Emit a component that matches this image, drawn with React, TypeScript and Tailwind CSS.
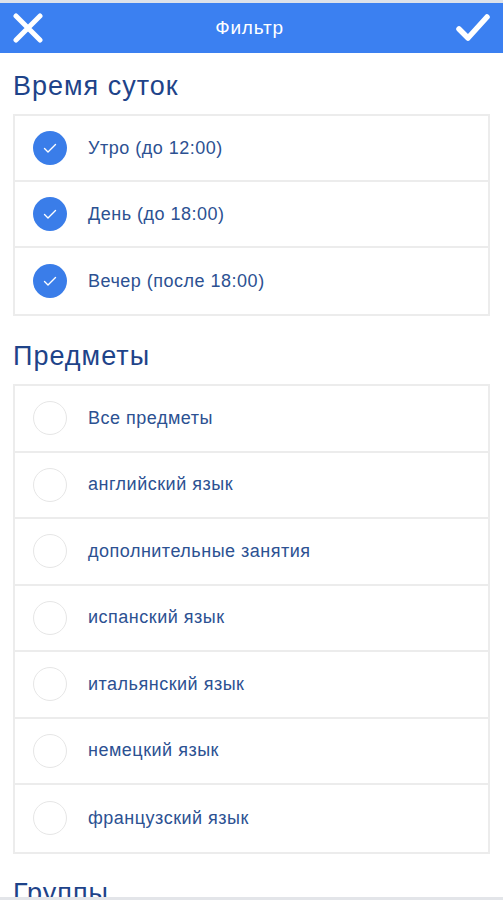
import React from "react";

const font = { fontFamily: '"Liberation Sans", Arial, sans-serif' };

function CheckCircle({ checked }: { checked: boolean }) {
  if (checked) {
    return (
      <div className="w-[34px] h-[34px] rounded-full bg-[#3a7de9] flex items-center justify-center shrink-0">
        <svg width="16" height="16" viewBox="0 0 16 16" fill="none">
          <path d="M2.5 8.5 L6 12 L13.5 4.5" stroke="#ffffff" strokeWidth="1.4" strokeLinecap="round" strokeLinejoin="round" />
        </svg>
      </div>
    );
  }
  return <div className="w-[34px] h-[34px] rounded-full border border-[#e6e6e6] bg-white shrink-0" />;
}

function Row({ label, checked, last, tall }: { label: string; checked: boolean; last?: boolean; tall?: boolean }) {
  return (
    <div
      className={`${tall ? "h-[66.5px]" : "h-[66px]"} flex items-center pl-[18px] ${last ? "" : "border-b-2 border-[#ececec]"}`}
    >
      <CheckCircle checked={checked} />
      <span className="ml-[21px] text-[18px] tracking-[0.5px] text-[#2c5192]">{label}</span>
    </div>
  );
}

function Section({
  title,
  items,
  checked,
  className,
  tall,
}: {
  title: string;
  items: string[];
  checked: boolean;
  className?: string;
  tall?: boolean;
}) {
  return (
    <div className={className}>
      <h2 className="text-[27px] leading-[32px] tracking-[1px] text-[#1e4389] mb-[12px] px-[13px]">{title}</h2>
      <div className="mx-[13px] border-2 border-[#ececec] bg-white">
        {items.map((it, i) => (
          <Row key={it} label={it} checked={checked} tall={tall} last={i === items.length - 1} />
        ))}
      </div>
    </div>
  );
}

export default function App() {
  return (
    <div className="w-[503px] h-[900px] overflow-hidden bg-white relative" style={font}>
      <div className="h-[3px] bg-[#dde2ea]" />
      <div className="h-[50px] bg-[#3b80f1] flex items-center justify-between px-[13px]">
        <svg width="30" height="30" viewBox="0 0 30 30">
          <path d="M3 3 L27 27 M27 3 L3 27" stroke="#ffffff" strokeWidth="5" strokeLinecap="round" />
        </svg>
        <span className="text-white text-[19px] tracking-[0.8px]">Фильтр</span>
        <svg width="34" height="30" viewBox="0 0 34 30">
          <path d="M3 16 L12 25 L31 4" stroke="#ffffff" strokeWidth="5.5" strokeLinecap="round" strokeLinejoin="round" fill="none" />
        </svg>
      </div>
      <Section
        className="pt-[17px]"
        title="Время суток"
        checked={true}
        items={["Утро (до 12:00)", "День (до 18:00)", "Вечер (после 18:00)"]}
      />
      <Section
        className="pt-[24px]"
        title="Предметы"
        checked={false}
        tall
        items={[
          "Все предметы",
          "английский язык",
          "дополнительные занятия",
          "испанский язык",
          "итальянский язык",
          "немецкий язык",
          "французский язык",
        ]}
      />
      <div className="pt-[23px]">
        <h2 className="text-[27px] leading-[32px] tracking-[1px] text-[#1e4389] px-[13px]">Группы</h2>
      </div>
      <div className="absolute left-0 right-0 bottom-0 h-[3px] bg-[#e3e5e9]" />
    </div>
  );
}
